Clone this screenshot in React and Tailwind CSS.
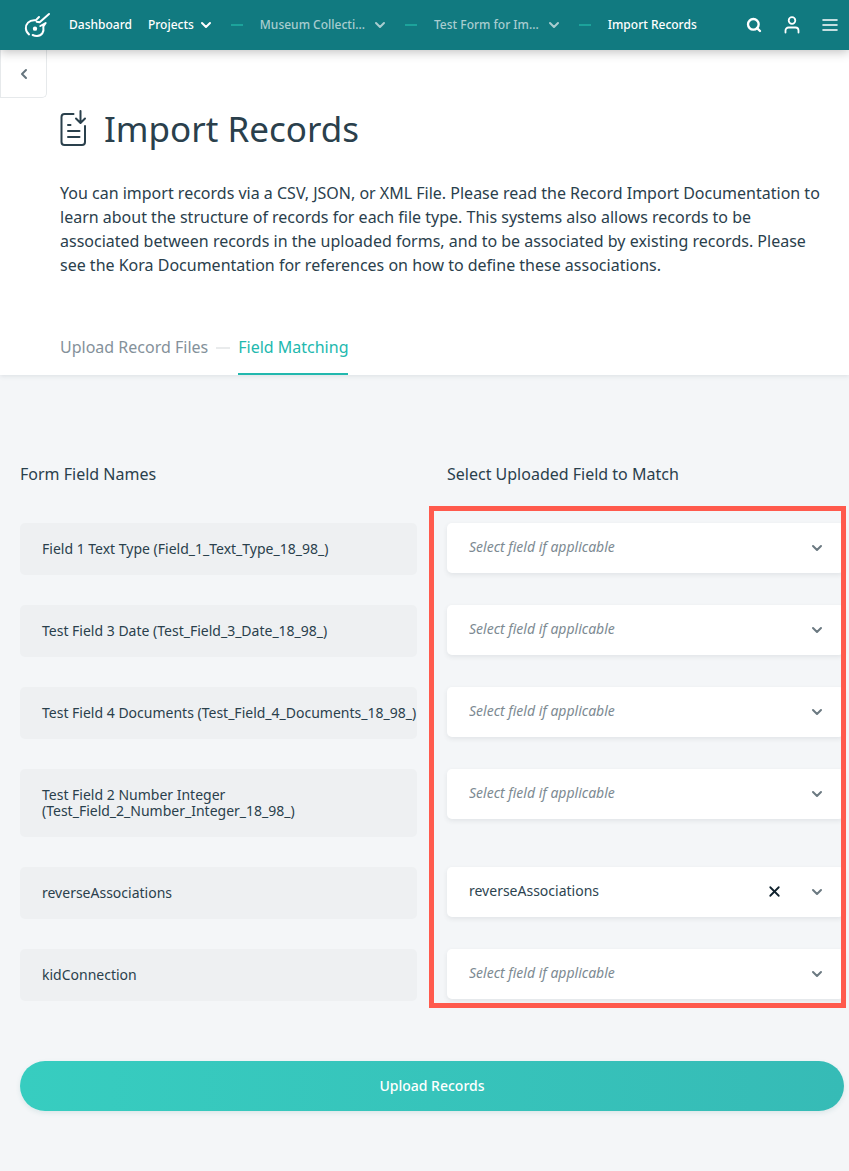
import { Search, ChevronDown, ChevronLeft, X } from "lucide-react";

const rows = [
  { name: "Field 1 Text Type (Field_1_Text_Type_18_98_)" },
  { name: "Test Field 3 Date (Test_Field_3_Date_18_98_)" },
  { name: "Test Field 4 Documents (Test_Field_4_Documents_18_98_)" },
  { name: "Test Field 2 Number Integer (Test_Field_2_Number_Integer_18_98_)" },
  { name: "reverseAssociations", value: "reverseAssociations" },
  { name: "kidConnection" },
];

function Logo() {
  return (
    <svg width="27" height="26" viewBox="72 36 81 78" fill="none" stroke="currentColor" strokeWidth="6" strokeLinecap="round" strokeLinejoin="round" aria-hidden="true">
      <path d="M87 103C75 94 75 77 84 68C90 62 98 60 107 61L117 51" />
      <path d="M110 65L119 67L147 42" />
      <path d="M121 78L137 69L130 79C133 97 125 108 111 108C106 108 102 107 98 105" />
      <circle cx="105" cy="86" r="6.500" fill="currentColor" stroke="none" />
    </svg>
  );
}

function ImportIcon() {
  return (
    <svg width="28" height="40" viewBox="0 0 28 40" fill="none" stroke="currentColor" strokeWidth="2" strokeLinecap="round" strokeLinejoin="round" aria-hidden="true">
      <path d="M13.500 5H4.500A3 3 0 0 0 1.500 8V33A3 3 0 0 0 4.500 36H22A3 3 0 0 0 25 33V17" />
      <path d="M20.500 2V13.500M16 9.500L20.500 14L25 9.500" />
      <path d="M8 16H10.500M8 22H19.500M8 28H19.500" />
    </svg>
  );
}

function Dash() {
  return <span className="h-0.5 w-3 shrink-0 bg-[#1ca39b]" aria-hidden="true" />;
}

function MatchSelect({ id, label, value }) {
  return (
    <div className="relative">
      <select
        id={id}
        aria-label={label}
        defaultValue={value || ""}
        className={
          "h-[50px] w-full appearance-none rounded-[5px] bg-white px-[22px] pb-0.5 text-sm shadow-[0_2px_5px_rgba(40,60,70,0.09)] " +
          (value ? "text-[#2d4450]" : "text-[#7d8a92] italic")
        }
      >
        <option value="">Select field if applicable</option>
        <option value="reverseAssociations">reverseAssociations</option>
      </select>
      {value && (
        <button type="button" aria-label="Clear selection" className="absolute top-4 right-[61px] text-[#10222d]">
          <X size={17} strokeWidth={2.5} />
        </button>
      )}
      <ChevronDown size={16} strokeWidth={3} className="pointer-events-none absolute top-[17px] right-[19px] text-[#6b7981]" />
    </div>
  );
}

export default function App() {
  return (
    <div className="min-h-screen bg-[#f4f6f8] font-['Noto_Sans','Open_Sans',sans-serif] text-[#2a404c]">
      <header className="relative z-10 flex h-[50px] items-center bg-[#117a80] pr-[11px] pl-6 text-xs font-medium text-white shadow-[0_2px_10px_rgba(0,0,0,0.25)]">
        <a href="#" aria-label="Home"><Logo /></a>
        <nav className="flex flex-1 items-center pl-[18px]" aria-label="Breadcrumb">
          <a href="#">Dashboard</a>
          <button type="button" className="ml-4 flex items-center gap-1">
            Projects <ChevronDown size={16} strokeWidth={3} />
          </button>
          <div className="ml-[17px] flex items-center gap-[17px] whitespace-nowrap">
            <Dash />
            <button type="button" className="flex items-center gap-[7px] text-[#a9cdd0]">
              Museum Collecti... <ChevronDown size={16} strokeWidth={3} />
            </button>
            <Dash />
            <button type="button" className="flex items-center gap-[7px] text-[#a9cdd0]">
              Test Form for Im... <ChevronDown size={16} strokeWidth={3} />
            </button>
            <Dash />
            <a href="#" aria-current="page">Import Records</a>
          </div>
        </nav>
        <div className="flex items-center gap-[22px]">
          <button type="button" aria-label="Search"><Search size={16} strokeWidth={3.5} /></button>
          <button type="button" aria-label="Account">
            <svg width="16" height="18" viewBox="0 0 16 18" fill="none" stroke="currentColor" strokeWidth="1.800" strokeLinecap="round" aria-hidden="true">
              <circle cx="8" cy="4.500" r="3.300" />
              <path d="M1.500 16.500V14.500A3 3 0 0 1 4.500 11.500H11.500A3 3 0 0 1 14.500 14.500V16.500" />
            </svg>
          </button>
          <button type="button" aria-label="Menu">
            <svg width="16" height="14" viewBox="0 0 16 14" stroke="currentColor" strokeWidth="1.600" strokeLinecap="round" aria-hidden="true">
              <path d="M1 2H15M1 7H15M1 12H15" />
            </svg>
          </button>
        </div>
      </header>

      <section className="relative bg-white pt-[59px] pr-[25px] pl-[60px] shadow-[0_1px_5px_rgba(40,60,70,0.12)]">
        <a href="#" aria-label="Back" className="absolute top-0 left-0 flex h-12 w-[47px] items-center justify-center rounded-br-[5px] border border-t-0 border-[#e6e9eb] text-[#66757e]">
          <ChevronLeft size={16} strokeWidth={3} />
        </a>
        <div className="flex items-center gap-4">
          <ImportIcon />
          <h1 className="text-[35px] leading-10">Import Records</h1>
        </div>
        <p className="mt-8 text-base leading-6">
          You can import records via a CSV, JSON, or XML File. Please read the Record Import Documentation to learn about the structure of records for each file type. This systems also allows records to be associated between records in the uploaded forms, and to be associated by existing records. Please see the Kora Documentation for references on how to define these associations.
        </p>
        <nav className="mt-[58px] flex items-start text-base leading-6" aria-label="Import steps">
          <a href="#" className="text-[#84919a]">Upload Record Files</a>
          <span className="mx-2 mt-3 h-0.5 w-3.5 bg-[#e9ebec]" aria-hidden="true" />
          <a href="#" aria-current="step" className="border-b-2 border-[#22b8ae] pb-3.5 text-[#22b8ae]">Field Matching</a>
        </nav>
      </section>

      <form className="pt-[87px] pr-[5px] pb-[60px] pl-5" onSubmit={(e) => e.preventDefault()}>
        <div className="grid grid-cols-2 gap-x-[30px] text-base leading-6">
          <h2>Form Field Names</h2>
          <h2>Select Uploaded Field to Match</h2>
        </div>
        <div className="relative mt-[37px] grid grid-cols-2 gap-[30px]">
          {rows.map((row, i) => (
            <div key={row.name} className="contents">
              <label htmlFor={"match-" + i} className="rounded-[5px] bg-[#eef0f2] py-[18px] pl-[22px] text-sm leading-4">
                {row.name}
              </label>
              <MatchSelect id={"match-" + i} label={row.name} value={row.value} />
            </div>
          ))}
          <div className="pointer-events-none absolute -top-[17px] -right-0.5 -bottom-[7px] left-[calc(50%-3px)] border-[5px] border-[#ff5a4d]" />
        </div>
        <button type="submit" className="mt-[60px] h-[50px] w-full rounded-full bg-linear-to-r from-[#37cdc0] to-[#36bbb6] text-sm font-medium text-white shadow-[0_2px_5px_rgba(40,120,120,0.12)]">
          Upload Records
        </button>
      </form>
    </div>
  );
}
